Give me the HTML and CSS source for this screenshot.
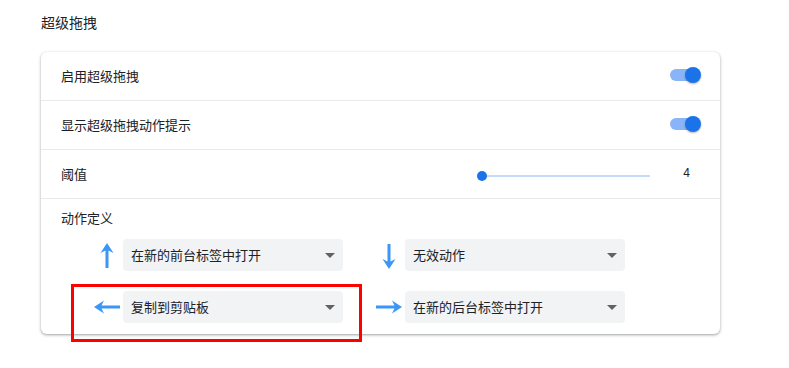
FILE: index.html
```html
<!DOCTYPE html>
<html lang="zh-CN">
<head>
<meta charset="UTF-8">
<title>超级拖拽</title>
<link rel="stylesheet" href="styles.css">
</head>
<body>
<div class="page">
    <h2 class="section-title">超级拖拽</h2>

    <div class="card">
        <div class="row">
            <span>启用超级拖拽</span>
            <span class="toggle on"><span class="knob"></span></span>
        </div>
        <div class="row">
            <span>显示超级拖拽动作提示</span>
            <span class="toggle on"><span class="knob"></span></span>
        </div>
        <div class="row">
            <span>阈值</span>
            <div class="slider-wrap">
                <div class="slider"><span class="slider-knob"></span></div>
                <span class="slider-value">4</span>
            </div>
        </div>
        <div class="row actions-row">
            <div class="actions-label">动作定义</div>
            <div class="actions">
                <div class="action">
                    <svg class="arrow" viewBox="0 0 28 28"><path d="M14 2 L20.5 12 L15.5 9.5 L15.5 27 L12.5 27 L12.5 9.5 L7.5 12 Z"/></svg>
                    <div class="select">在新的前台标签中打开<span class="caret"></span></div>
                </div>
                <div class="action">
                    <svg class="arrow" viewBox="0 0 28 28"><path d="M14 28 L20.5 18 L15.5 20.5 L15.5 3 L12.5 3 L12.5 20.5 L7.5 18 Z"/></svg>
                    <div class="select">无效动作<span class="caret"></span></div>
                </div>
                <div class="action">
                    <svg class="arrow" viewBox="0 0 28 28"><path d="M1 14 L11 7.5 L8.5 12.5 L27 12.5 L27 15.5 L8.5 15.5 L11 20.5 Z"/></svg>
                    <div class="select">复制到剪贴板<span class="caret"></span></div>
                </div>
                <div class="action">
                    <svg class="arrow" viewBox="0 0 28 28"><path d="M27 14 L17 7.5 L19.5 12.5 L1 12.5 L1 15.5 L19.5 15.5 L17 20.5 Z"/></svg>
                    <div class="select">在新的后台标签中打开<span class="caret"></span></div>
                </div>
            </div>
        </div>
    </div>

    <!-- highlight box -->
    <div class="highlight"></div>
</div>
</body>
</html>
```

FILE: styles.css
```css
body {
    margin: 0;
    min-height: 368px;
    font-family: "Noto Sans CJK SC", "Noto Sans", sans-serif;
    color: #202124;
    background: #fff;
}

.page {
    position: relative;
    padding: 12px 0 0 41px;
    width: 680px;
    height: 356px;
}

.section-title {
    margin: 0;
    font-size: 14px;
    font-weight: normal;
    line-height: 20px;
    height: 40px;
}

.card {
    width: 679px;
    background: #fff;
    border-radius: 6px;
    box-shadow: 0 1px 2px rgba(60,64,67,0.3), 0 1px 3px 1px rgba(60,64,67,0.15);
}

.row {
    display: flex;
    align-items: center;
    justify-content: space-between;
    box-sizing: border-box;
    height: 49px;
    padding: 0 20px 2px;
    font-size: 13px;
    border-top: 1px solid #e8eaed;
}

.row:first-child {
    border-top: none;
    height: 48px;
}

/* toggle */
.toggle {
    position: relative;
    width: 30px;
    height: 12px;
    border-radius: 6px;
    background: #8ab4f8;
}

.knob {
    position: absolute;
    top: -2px;
    right: -1px;
    width: 16px;
    height: 16px;
    border-radius: 50%;
    background: #1a73e8;
    box-shadow: 0 1px 2px rgba(0,0,0,0.3);
}

/* slider */
.slider-wrap {
    display: flex;
    align-items: center;
}

.slider {
    position: relative;
    width: 168px;
    height: 2px;
    margin-top: 6px;
    background: #c6dafc;
}

.slider-knob {
    position: absolute;
    left: -5px;
    top: -4px;
    width: 10px;
    height: 10px;
    border-radius: 50%;
    background: #1a73e8;
}

.slider-value {
    width: 40px;
    text-align: right;
    padding-right: 10px;
    font-family: "Liberation Sans", Arial, sans-serif;
    font-size: 12px;
}

/* actions */
.actions-row {
    display: block;
    height: auto;
    padding: 9px 20px 11px;
}

.actions-label {
    line-height: 20px;
}

.actions {
    display: flex;
    flex-wrap: wrap;
    row-gap: 20px;
    margin-top: 11px;
}

.action {
    display: flex;
    align-items: center;
    padding-left: 32px;
}

.arrow {
    width: 28px;
    height: 28px;
    margin-right: 2px;
    fill: #3b97f7;
}

.select {
    position: relative;
    box-sizing: border-box;
    width: 220px;
    height: 32px;
    line-height: 31px;
    padding-left: 8px;
    border-radius: 4px;
    background: #f1f3f4;
    font-size: 13px;
}

.caret {
    position: absolute;
    right: 8px;
    top: 14px;
    width: 0;
    height: 0;
    border-left: 5px solid transparent;
    border-right: 5px solid transparent;
    border-top: 5px solid #5f6368;
}

.highlight {
    position: absolute;
    left: 71px;
    top: 284px;
    width: 285px;
    height: 52px;
    border: 3px solid #ff0000;
}
```
